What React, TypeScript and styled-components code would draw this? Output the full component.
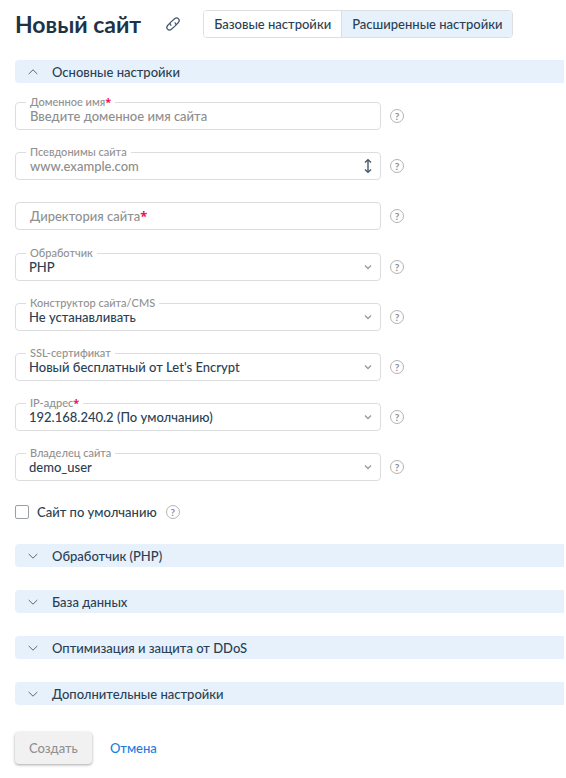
import React, { useId, useState } from 'react';
import styled, { createGlobalStyle, css } from 'styled-components';

const GlobalStyle = createGlobalStyle`
  *, *::before, *::after { box-sizing: border-box; }
  body {
    margin: 0;
    background: #fff;
    color: #2b3f54;
    font: 500 13px/16px Lato, "Noto Sans", sans-serif;
  }
  button, input, select, textarea { font: inherit; color: inherit; margin: 0; }
`;

const Page = styled.main`
  padding: 10px 2px 14px 15px;
`;

const Header = styled.header`
  display: flex;
  align-items: center;
  height: 28px;
  margin-bottom: 22px;
`;

const Title = styled.h1`
  margin: 0 24px 0 0;
  font-size: 23px;
  line-height: 28px;
  font-weight: 700;
  color: #1c3348;
  white-space: nowrap;
`;

const LinkButton = styled.button`
  display: flex;
  padding: 0;
  margin-right: 22px;
  border: 0;
  background: none;
  color: #43566a;
  cursor: pointer;
`;

const Segmented = styled.div`
  display: flex;
  height: 28px;
  border: 1px solid #dcdfe2;
  border-radius: 4px;
  overflow: hidden;
`;

const Segment = styled.button<{ $active?: boolean }>`
  padding: 0 10px;
  border: 0;
  background: ${(p) => (p.$active ? '#e6f1fc' : '#fff')};
  white-space: nowrap;
  cursor: pointer;
  & + & { border-left: 1px solid #dcdfe2; }
`;

const SectionHeader = styled.button`
  display: flex;
  align-items: center;
  gap: 14px;
  width: 100%;
  height: 23px;
  padding: 0 13px;
  border: 0;
  border-radius: 4px 0 0 4px;
  background: #e6f1fc;
  text-align: left;
  cursor: pointer;
  svg { color: #55687b; }
`;

const Sections = styled.div`
  display: grid;
  gap: 23px;
  margin-top: 24px;
`;

const Form = styled.form`
  display: grid;
  gap: 23px;
  max-width: 389px;
  margin-top: 19px;
`;

const Fields = styled.div`
  display: grid;
  gap: 22px;
`;

const FieldRow = styled.div`
  display: flex;
  align-items: center;
  gap: 9px;
`;

const FieldBox = styled.div`
  position: relative;
  display: flex;
  flex: 1;
  height: 28px;
  border: 1px solid #dcdddf;
  border-radius: 4px;
  &:focus-within { border-color: #2a82e4; }
`;

const FieldLabel = styled.label<{ $inside?: boolean }>`
  position: absolute;
  left: 10px;
  padding: 0 4px;
  color: #919191;
  white-space: nowrap;
  background: #fff;
  ${(p) =>
    p.$inside
      ? css`
          top: 5px;
        `
      : css`
          top: -8px;
          font-size: 11px;
          line-height: 14px;
        `}
`;

const Required = styled.span`
  color: #ee1155;
  font-family: "Noto Sans", sans-serif;
  font-weight: 700;
  line-height: 1;
`;

const controlStyle = css`
  flex: 1;
  min-width: 0;
  height: 26px;
  padding: 4px 14px;
  border: 0;
  border-radius: 4px;
  outline: 0;
  background: transparent;
  &::placeholder { color: #8e8e8e; opacity: 1; }
`;

const TextInput = styled.input`${controlStyle}`;

const TextArea = styled.textarea`
  ${controlStyle}
  line-height: 18px;
  resize: none;
  overflow: hidden;
`;

const Select = styled.select`
  ${controlStyle}
  padding: 0 32px 0 13px;
  appearance: none;
  cursor: pointer;
`;

const Adornment = styled.span`
  position: absolute;
  right: 7px;
  top: 0;
  bottom: 0;
  display: flex;
  align-items: center;
  color: #9a9da1;
  pointer-events: none;
`;

const ExpandButton = styled.button`
  display: flex;
  align-items: center;
  padding: 0 7px;
  border: 0;
  background: none;
  color: #43566a;
  cursor: ns-resize;
`;

const HelpButton = styled.button`
  display: grid;
  place-items: center;
  width: 14px;
  height: 14px;
  padding: 0;
  border: 1px solid #b4b4b4;
  border-radius: 50%;
  background: #fff;
  color: #8c8c8c;
  font-size: 10px;
  line-height: 12px;
  font-weight: 700;
  cursor: help;
`;

const CheckRow = styled.div`
  display: flex;
  align-items: center;
  gap: 9px;
`;

const CheckLabel = styled.label`
  display: flex;
  align-items: center;
  gap: 8px;
`;

const Checkbox = styled.input`
  appearance: none;
  width: 14px;
  height: 14px;
  border: 1px solid #9a9fa4;
  border-radius: 2px;
  background: #fff;
  &:checked { background: #2a82e4; }
`;

const Footer = styled.footer`
  display: flex;
  align-items: center;
  gap: 18px;
  margin-top: 27px;
`;

const SubmitButton = styled.button`
  height: 32px;
  padding: 0 14px;
  border: 0;
  border-radius: 4px;
  background: #f1f1f1;
  box-shadow: 0 1px 3px rgba(0, 0, 0, 0.35);
  color: #919191;
`;

const CancelLink = styled.a`
  color: #1a7ce0;
  text-decoration: none;
`;

const Chevron = ({ up, small }: { up?: boolean; small?: boolean }) => (
  <svg
    width={10}
    height={10}
    viewBox="0 0 10 10"
    fill="none"
    stroke="currentColor"
    strokeWidth={small ? 1.4 : 1}
    aria-hidden
  >
    <path d={small ? 'M2 3.5 5 6.5 8 3.5' : up ? 'M.7 7 5 2.8 9.3 7' : 'M.7 3 5 7.2 9.3 3'} />
  </svg>
);

const ChainIcon = () => (
  <svg width={16} height={16} viewBox="0 0 16 16" fill="none" stroke="currentColor" strokeWidth={1.2} aria-hidden>
    <path d="M6.4 9.6C4.9 8.7 4.6 7.2 5.8 6.1L9.6 2.7C10.9 1.6 12.5 1.7 13.5 2.8S14.4 5.3 13.4 6.5L10.8 9.2" />
    <path d="M9.6 6.4C11.1 7.3 11.4 8.8 10.2 9.9L6.4 13.3C5.1 14.4 3.5 14.3 2.5 13.2S1.6 10.7 2.6 9.5L5.2 6.8" />
  </svg>
);

const ExpandIcon = () => (
  <svg width={10} height={16} viewBox="0 0 10 16" fill="none" stroke="currentColor" strokeWidth={1.4} aria-hidden>
    <path d="M5 2v12" />
    <path d="M2 4.5 5 1.8 8 4.5M2 11.5 5 14.2 8 11.5" />
  </svg>
);

const Help = () => (
  <HelpButton type="button" aria-label="Справка">?</HelpButton>
);

type FieldProps = {
  label: string;
  required?: boolean;
  placeholder?: string;
  kind?: 'text' | 'area' | 'select';
  inside?: boolean;
  options?: string[];
};

function Field({ label, required, placeholder, kind = 'text', inside, options = [] }: FieldProps) {
  const id = useId();
  const [value, setValue] = useState('');
  return (
    <FieldRow>
      <FieldBox>
        {kind === 'text' && (
          <TextInput id={id} placeholder={placeholder} value={value} onChange={(e) => setValue(e.target.value)} />
        )}
        {kind === 'area' && (
          <>
            <TextArea id={id} rows={1} placeholder={placeholder} />
            <ExpandButton type="button" aria-label="Развернуть">
              <ExpandIcon />
            </ExpandButton>
          </>
        )}
        {kind === 'select' && (
          <>
            <Select id={id}>
              {options.map((o) => (
                <option key={o}>{o}</option>
              ))}
            </Select>
            <Adornment>
              <Chevron small />
            </Adornment>
          </>
        )}
        <FieldLabel htmlFor={id} $inside={inside && !value}>
          {label}
          {required && <Required>*</Required>}
        </FieldLabel>
      </FieldBox>
      <Help />
    </FieldRow>
  );
}

const collapsed = ['Обработчик (PHP)', 'База данных', 'Оптимизация и защита от DDoS', 'Дополнительные настройки'];

export default function App() {
  const [advanced, setAdvanced] = useState(true);
  return (
    <>
      <GlobalStyle />
      <Page>
        <Header>
          <Title>Новый сайт</Title>
          <LinkButton type="button" aria-label="Скопировать ссылку">
            <ChainIcon />
          </LinkButton>
          <Segmented>
            <Segment type="button" $active={!advanced} onClick={() => setAdvanced(false)}>
              Базовые настройки
            </Segment>
            <Segment type="button" $active={advanced} onClick={() => setAdvanced(true)}>
              Расширенные настройки
            </Segment>
          </Segmented>
        </Header>

        <SectionHeader type="button" aria-expanded>
          <Chevron up />
          Основные настройки
        </SectionHeader>

        <Form id="site-form" onSubmit={(e) => e.preventDefault()}>
          <Fields>
            <Field label="Доменное имя" required placeholder="Введите доменное имя сайта" />
            <Field label="Псевдонимы сайта" kind="area" placeholder="www.example.com" />
            <Field label="Директория сайта" required inside />
          </Fields>
          <Fields>
            <Field label="Обработчик" kind="select" options={['PHP']} />
            <Field label="Конструктор сайта/CMS" kind="select" options={['Не устанавливать']} />
            <Field label="SSL-сертификат" kind="select" options={["Новый бесплатный от Let's Encrypt"]} />
            <Field label="IP-адрес" required kind="select" options={['192.168.240.2 (По умолчанию)']} />
            <Field label="Владелец сайта" kind="select" options={['demo_user']} />
          </Fields>
          <CheckRow>
            <CheckLabel>
              <Checkbox type="checkbox" />
              Сайт по умолчанию
            </CheckLabel>
            <Help />
          </CheckRow>
        </Form>

        <Sections>
          {collapsed.map((name) => (
            <SectionHeader key={name} type="button" aria-expanded={false}>
              <Chevron />
              {name}
            </SectionHeader>
          ))}
        </Sections>

        <Footer>
          <SubmitButton type="submit" form="site-form" disabled>
            Создать
          </SubmitButton>
          <CancelLink href="#cancel">Отмена</CancelLink>
        </Footer>
      </Page>
    </>
  );
}
